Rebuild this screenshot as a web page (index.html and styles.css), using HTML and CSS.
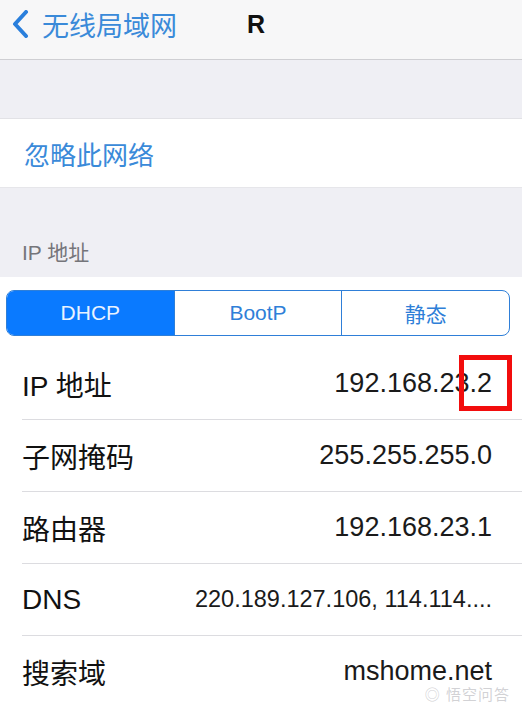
FILE: index.html
```html
<!DOCTYPE html>
<html>
<head>
    <title>IP 地址</title>
    <link rel="stylesheet" href="styles.css">
</head>
<body>
    <div class="screen">
        <div class="navbar">
            <div class="back">
                <svg class="chevron" width="18" height="28" viewBox="0 0 18 28">
                    <path d="M15 2 L4 14 L15 26" fill="none" stroke="#2a7fdc" stroke-width="4" stroke-linecap="round" stroke-linejoin="round"/>
                </svg>
                <span>无线局域网</span>
            </div>
            <div class="title">R</div>
        </div>

        <div class="spacer"></div>

        <div class="forget">忽略此网络</div>

        <div class="section-head">IP 地址</div>

        <div class="segment-wrap">
            <div class="segment">
                <div class="seg active">DHCP</div>
                <div class="seg">BootP</div>
                <div class="seg">静态</div>
            </div>
        </div>

        <div class="rows">
            <div class="row">
                <span class="label">IP 地址</span>
                <span class="value">192.168.23.2</span>
                <div class="mark"></div>
            </div>
            <div class="row">
                <span class="label">子网掩码</span>
                <span class="value">255.255.255.0</span>
            </div>
            <div class="row">
                <span class="label">路由器</span>
                <span class="value">192.168.23.1</span>
            </div>
            <div class="row">
                <span class="label">DNS</span>
                <span class="value small">220.189.127.106, 114.114....</span>
            </div>
            <div class="row">
                <span class="label">搜索域</span>
                <span class="value">mshome.net</span>
            </div>
        </div>

        <div class="watermark">◎ 悟空问答</div>
    </div>
</body>
</html>
```

FILE: styles.css
```css
body {
    margin: 0;
    background-color: #ffffff;
    font-family: "Liberation Sans", "Noto Sans CJK SC", sans-serif;
    color: #111;
}

.screen {
    width: 522px;
    height: 706px;
    overflow: hidden;
    position: relative;
}

.navbar {
    height: 60px;
    box-sizing: border-box;
    padding-bottom: 11px;
    background-color: #f7f7f8;
    border-bottom: 1px solid #cfcfd3;
    display: flex;
    align-items: center;
}

.back {
    display: flex;
    align-items: center;
    padding-left: 11px;
    color: #3a8ad9;
    font-size: 27px;
}

.chevron {
    margin-right: 13px;
}

.title {
    margin-left: 70px;
    font-size: 25px;
    font-weight: bold;
    color: #111;
}

.spacer {
    height: 58px;
    background-color: #efeff4;
    border-bottom: 1px solid #e2e2e6;
}

.forget {
    height: 68px;
    display: flex;
    align-items: center;
    padding-left: 24px;
    font-size: 26px;
    color: #3a8ad9;
    background-color: #fff;
}

.section-head {
    height: 90px;
    box-sizing: border-box;
    background-color: #efeff4;
    border-top: 1px solid #e6e6ea;
    color: #75757a;
    font-size: 21px;
    display: flex;
    align-items: flex-end;
    padding-left: 22px;
    padding-bottom: 11px;
}

.segment-wrap {
    padding: 13px 12px 12px 6px;
    background-color: #fff;
}

.segment {
    display: flex;
    height: 46px;
    border: 1.5px solid #2f7fd8;
    border-radius: 8px;
    overflow: hidden;
    box-sizing: border-box;
}

.seg {
    flex: 1;
    display: flex;
    align-items: center;
    justify-content: center;
    font-size: 21px;
    color: #2f7fd8;
    border-left: 1.5px solid #2f7fd8;
}

.seg:first-child {
    border-left: none;
}

.seg.active {
    background-color: #0a7aff;
    color: #e8f2ff;
}

.row {
    position: relative;
    height: 71px;
    margin-left: 22px;
    padding-right: 30px;
    border-bottom: 1px solid #dcdce0;
    display: flex;
    align-items: center;
    justify-content: space-between;
}

.label {
    font-size: 28px;
    color: #111;
}

.value {
    font-size: 27px;
    color: #1a1a1a;
}

.value.small {
    font-size: 23.5px;
}

.mark {
    position: absolute;
    right: 10px;
    top: 7px;
    width: 53px;
    height: 56px;
    box-sizing: border-box;
    border: 5px solid #f20d0d;
}

.watermark {
    position: absolute;
    right: 12px;
    bottom: 2px;
    font-size: 15px;
    line-height: 18px;
    color: rgba(190, 190, 195, 0.7);
    letter-spacing: 1px;
}
```
